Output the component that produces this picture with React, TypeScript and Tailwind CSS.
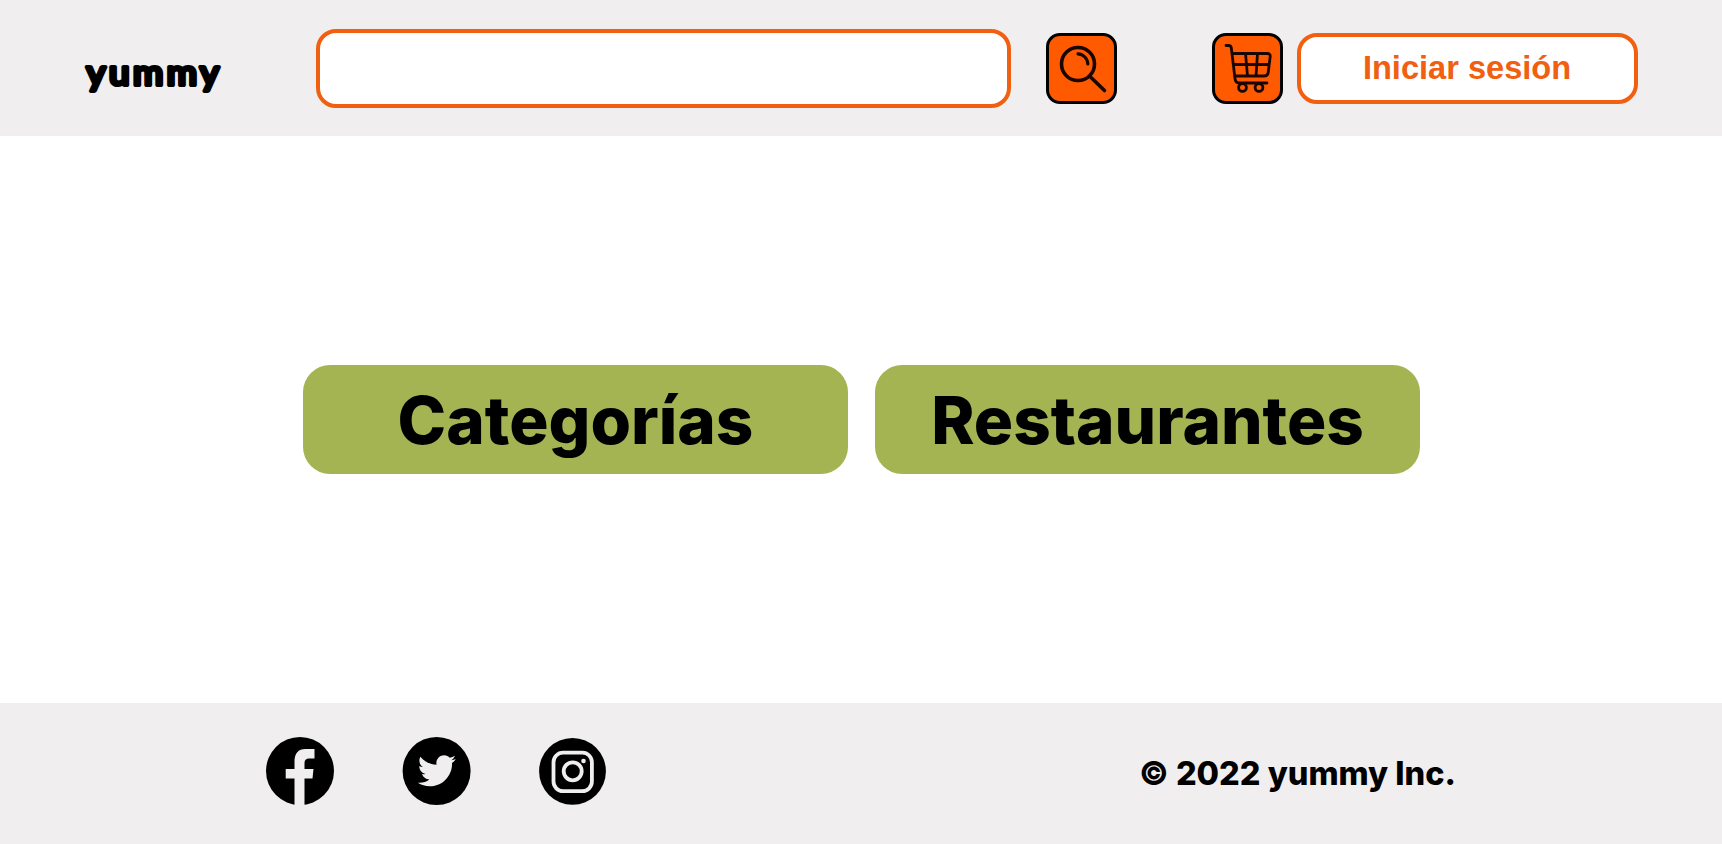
import type { ReactNode } from 'react';

const Logo = () => (
  <svg className="h-[52px] w-[148px] overflow-visible" viewBox="0 0 148 52" role="img" aria-label="yummy">
    <text
      x="7"
      y="30.500"
      transform="scale(1.080 1)"
      textLength="122.500"
      lengthAdjust="spacing"
      className="fill-black stroke-black font-['Lato',sans-serif] text-[34px] font-normal"
      strokeWidth="4.200"
      strokeLinecap="round"
      strokeLinejoin="round"
    >
      yummy
    </text>
  </svg>
);

const SearchIcon = () => (
  <svg className="h-[71px] w-[71px] shrink-0" viewBox="0 0 71 71" fill="none" stroke="#1a0600" strokeLinecap="round">
    <circle cx="32" cy="31" r="16.500" strokeWidth="3.600" />
    <path d="M32 20.800a10.500 10.500 0 0 1 9.800 10.200" strokeWidth="3.200" />
    <path d="M44 43.500L58.500 57.500" strokeWidth="3.600" />
  </svg>
);

const CartIcon = () => (
  <svg
    className="h-[71px] w-[71px] shrink-0"
    viewBox="0 0 71 71"
    fill="none"
    stroke="#1a0600"
    strokeWidth="2.800"
    strokeLinecap="round"
    strokeLinejoin="round"
  >
    <path d="M14 12.500h2.500q2.500 0 2.800 2.500L23 45.500q.5 4.500 4 4.500H55" />
    <path d="M20.500 20.500H55q3.500 0 3.200 3L56.200 39.500q-.5 3.500-4 3.500H23M22 31.500H57M33.500 20.500L35.500 43M45.500 20.500L44 43" />
    <circle cx="30.500" cy="54.500" r="3.900" />
    <circle cx="47" cy="54.500" r="3.900" />
  </svg>
);

const FacebookIcon = () => (
  <svg className="h-[68px] w-[68px]" viewBox="0 0 68 68">
    <circle cx="34" cy="34" r="34" fill="#000" />
    <path
      d="M28.500 69V41.500H19.700V32H28.500V24.500Q28.500 12 39.500 12H48.500V21.500H43Q38.500 21.500 38.500 26V32H47.500L46.500 41.500H38.500V69Z"
      fill="#f0eeef"
    />
  </svg>
);

const TwitterIcon = () => (
  <svg className="h-[68px] w-[68px] overflow-visible" viewBox="0 0 68 68">
    <circle cx="34.600" cy="34" r="34" fill="#000" />
    <path
      transform="translate(14.200 13.600) scale(1.680)"
      d="M23.643 4.937c-.835.370-1.732.620-2.675.733.962-.576 1.700-1.490 2.048-2.578-.900.534-1.897.922-2.958 1.130-.850-.904-2.060-1.470-3.400-1.470-2.572 0-4.658 2.086-4.658 4.660 0 .364.042.718.120 1.060-3.873-.195-7.304-2.050-9.602-4.868-.400.690-.630 1.490-.630 2.342 0 1.616.823 3.043 2.072 3.878-.764-.025-1.482-.234-2.110-.583v.060c0 2.257 1.605 4.140 3.737 4.568-.392.106-.803.162-1.227.162-.300 0-.593-.028-.877-.082.593 1.850 2.313 3.198 4.352 3.234-1.595 1.250-3.604 1.995-5.786 1.995-.376 0-.747-.022-1.112-.065 2.062 1.323 4.510 2.093 7.140 2.093 8.570 0 13.255-7.098 13.255-13.254 0-.200-.005-.402-.014-.602.910-.658 1.700-1.477 2.323-2.410z"
      fill="#f0eeef"
    />
  </svg>
);

const InstagramIcon = () => (
  <svg className="h-[68px] w-[68px]" viewBox="0 0 68 68" fill="none" stroke="#f0eeef">
    <circle cx="34.500" cy="34.300" r="33.400" fill="#000" stroke="none" />
    <rect x="15.500" y="15.700" width="38.400" height="38.400" rx="9.500" strokeWidth="3.800" />
    <circle cx="34.700" cy="34.300" r="9" strokeWidth="3.800" />
    <circle cx="45.500" cy="24" r="2.300" fill="#f0eeef" stroke="none" />
  </svg>
);

const IconButton = ({ label, className, children }: { label: string; className: string; children: ReactNode }) => (
  <button
    aria-label={label}
    className={`flex h-[71px] w-[71px] shrink-0 items-center justify-center rounded-[14px] border-[3px] border-black bg-[#ff5a00] ${className}`}
  >
    {children}
  </button>
);

const MenuButton = ({ children }: { children: ReactNode }) => (
  <button className="h-[109px] w-[545px] rounded-[27px] bg-[#a5b453] pt-1 text-[65.500px] font-extrabold text-black">
    {children}
  </button>
);

const Header = () => (
  <header className="flex h-[136px] items-center bg-[#f0eeef] pl-[79px]">
    <div className="mt-6">
      <Logo />
    </div>
    <input
      aria-label="Buscar"
      className="ml-[89px] h-[79px] w-[695px] rounded-[20px] border-4 border-[#f06010] bg-white px-5 text-3xl outline-none"
    />
    <IconButton label="Buscar" className="ml-[35px]">
      <SearchIcon />
    </IconButton>
    <IconButton label="Carrito" className="ml-[95px]">
      <CartIcon />
    </IconButton>
    <button className="ml-[14px] h-[71px] w-[341px] rounded-[20px] border-4 border-[#f06010] bg-white pr-px font-['Liberation_Sans',Arial,sans-serif] text-[32.600px] font-bold text-[#f06010]">
      Iniciar sesión
    </button>
  </header>
);

const Footer = () => (
  <footer className="flex h-[141px] items-center justify-between bg-[#f0eeef] px-[266px]">
    <div className="flex gap-[68px] pb-[5px]">
      <FacebookIcon />
      <TwitterIcon />
      <InstagramIcon />
    </div>
    <p className="pt-[2px] text-[32.500px] font-extrabold">© 2022 yummy Inc.</p>
  </footer>
);

export default function App() {
  return (
    <div className="flex h-screen flex-col bg-white font-['Inter',sans-serif] text-black">
      <Header />
      <main className="flex flex-1 items-center justify-center gap-[27px] pl-px">
        <MenuButton>Categorías</MenuButton>
        <MenuButton>Restaurantes</MenuButton>
      </main>
      <Footer />
    </div>
  );
}
